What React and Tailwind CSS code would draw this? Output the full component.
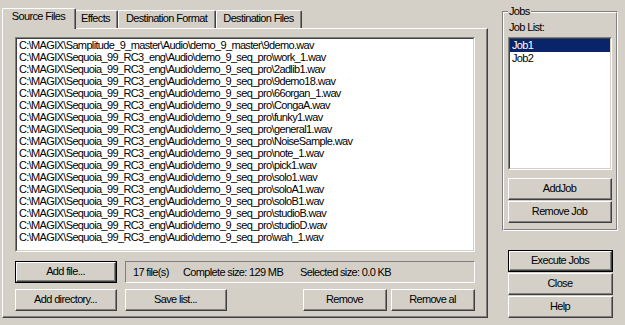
import React from "react";

const files = [
  "C:\\MAGIX\\Samplitude_9_master\\Audio\\demo_9_master\\9demo.wav",
  "C:\\MAGIX\\Sequoia_99_RC3_eng\\Audio\\demo_9_seq_pro\\work_1.wav",
  "C:\\MAGIX\\Sequoia_99_RC3_eng\\Audio\\demo_9_seq_pro\\2adlib1.wav",
  "C:\\MAGIX\\Sequoia_99_RC3_eng\\Audio\\demo_9_seq_pro\\9demo18.wav",
  "C:\\MAGIX\\Sequoia_99_RC3_eng\\Audio\\demo_9_seq_pro\\66organ_1.wav",
  "C:\\MAGIX\\Sequoia_99_RC3_eng\\Audio\\demo_9_seq_pro\\CongaA.wav",
  "C:\\MAGIX\\Sequoia_99_RC3_eng\\Audio\\demo_9_seq_pro\\funky1.wav",
  "C:\\MAGIX\\Sequoia_99_RC3_eng\\Audio\\demo_9_seq_pro\\general1.wav",
  "C:\\MAGIX\\Sequoia_99_RC3_eng\\Audio\\demo_9_seq_pro\\NoiseSample.wav",
  "C:\\MAGIX\\Sequoia_99_RC3_eng\\Audio\\demo_9_seq_pro\\note_1.wav",
  "C:\\MAGIX\\Sequoia_99_RC3_eng\\Audio\\demo_9_seq_pro\\pick1.wav",
  "C:\\MAGIX\\Sequoia_99_RC3_eng\\Audio\\demo_9_seq_pro\\solo1.wav",
  "C:\\MAGIX\\Sequoia_99_RC3_eng\\Audio\\demo_9_seq_pro\\soloA1.wav",
  "C:\\MAGIX\\Sequoia_99_RC3_eng\\Audio\\demo_9_seq_pro\\soloB1.wav",
  "C:\\MAGIX\\Sequoia_99_RC3_eng\\Audio\\demo_9_seq_pro\\studioB.wav",
  "C:\\MAGIX\\Sequoia_99_RC3_eng\\Audio\\demo_9_seq_pro\\studioD.wav",
  "C:\\MAGIX\\Sequoia_99_RC3_eng\\Audio\\demo_9_seq_pro\\wah_1.wav",
];

function Raised({ children }) {
  return (
    <div className="h-full w-full border border-t-white border-l-white border-r-[#404040] border-b-[#404040]">
      <div className="h-full w-full flex items-center justify-center border-r border-b border-[#808080] leading-[13px]">
        {children}
      </div>
    </div>
  );
}

function Btn({ children, className = "", def = false }) {
  return (
    <div className={"h-[22px] shrink-0 " + className}>
      {def ? (
        <div className="h-full w-full border border-black">
          <Raised>{children}</Raised>
        </div>
      ) : (
        <Raised>{children}</Raised>
      )}
    </div>
  );
}

function Sunken({ children, className = "" }) {
  return (
    <div className={"border border-t-[#808080] border-l-[#808080] border-r-white border-b-white " + className}>
      <div className="h-full w-full border border-t-[#404040] border-l-[#404040] border-r-[#D4D0C8] border-b-[#D4D0C8] bg-white overflow-hidden">
        {children}
      </div>
    </div>
  );
}

function Tab({ label, selected, className = "" }) {
  return (
    <div
      className={
        (selected
          ? "h-[21px] relative z-10 "
          : "h-[18px] mt-[2px] relative z-0 ") +
        "bg-[#D4D0C8] rounded-tl-[2px] rounded-tr-[2px] border-l border-t border-r border-l-white border-t-white border-r-[#404040] " +
        className
      }
    >
      <div className="h-full border-r border-[#808080] flex justify-center pt-[1px]">
        <span className="leading-[13px] h-[13px] whitespace-nowrap">{label}</span>
      </div>
    </div>
  );
}

export default function App() {
  return (
    <div className="w-[625px] h-[325px] bg-[#D4D0C8] flex overflow-hidden text-black text-[11px] tracking-[-0.65px] font-['Liberation_Sans',Arial,sans-serif]">
      {/* Left: tab control */}
      <div className="ml-[2px] mt-[8px] w-[486px] flex flex-col shrink-0">
        <div className="h-[20px] flex items-start">
          <Tab label="Source Files" selected className="w-[74px]" />
          <Tab label="Effects" className="w-[44px] -ml-[2px]" />
          <Tab label="Destination Format" className="w-[98px]" />
          <Tab label="Destination Files" className="w-[86px]" />
        </div>
        <div className="h-[290px] border border-t-white border-l-white border-r-[#404040] border-b-[#404040]">
          <div className="h-full w-full border-r border-b border-[#808080] pl-[12px] pt-[8px] flex flex-col">
            <Sunken className="w-[460px] h-[215px]">
              <div className="flex flex-col pl-[2px]">
                {files.map((f) => (
                  <div key={f} className="h-[12px] leading-[12px] whitespace-nowrap">
                    {f}
                  </div>
                ))}
              </div>
            </Sunken>
            <div className="mt-[9px] flex h-[22px]">
              <Btn def className="w-[102px]">Add file...</Btn>
              <div className="ml-[8px] w-[350px] h-[22px] border border-t-[#808080] border-l-[#808080] border-r-white border-b-white flex items-center pl-[7px] leading-[13px] whitespace-nowrap">
                <span className="w-[50px]">17 file(s)</span>
                <span className="w-[117px]">Complete size: 129 MB</span>
                <span>Selected size: 0.0 KB</span>
              </div>
            </div>
            <div className="mt-[6px] flex h-[22px]">
              <Btn className="w-[102px]">Add directory...</Btn>
              <Btn className="w-[102px] ml-[8px]">Save list...</Btn>
              <Btn className="w-[84px] ml-[76px]">Remove</Btn>
              <Btn className="w-[84px] ml-[4px]">Remove al</Btn>
            </div>
          </div>
        </div>
      </div>

      {/* Right column */}
      <div className="ml-[14px] w-[116px] flex flex-col shrink-0">
        <div className="mt-[11px] h-[220px] relative border border-t-[#808080] border-l-[#808080] border-r-white border-b-white">
          <div className="h-full w-full border border-t-white border-l-white border-r-[#808080] border-b-[#808080] flex flex-col px-[4px] pt-[8px]">
            <div className="leading-[13px] h-[13px] pl-[1px]">Job List:</div>
            <Sunken className="mt-[3px] w-[104px] h-[133px]">
              <div className="flex flex-col">
                <div className="h-[13px] leading-[13px] bg-[#0A246A] text-white pl-[2px]">Job1</div>
                <div className="h-[13px] leading-[13px] pl-[2px]">Job2</div>
              </div>
            </Sunken>
            <Btn className="mt-[8px] w-[104px]">AddJob</Btn>
            <Btn className="mt-[1px] w-[104px]">Remove Job</Btn>
          </div>
          <span className="absolute left-[5px] -top-[7px] px-[1px] bg-[#D4D0C8] leading-[13px]">Jobs</span>
        </div>
        <div className="ml-[6px] mt-[19px] w-[105px] flex flex-col">
          <Btn def className="w-[105px]">Execute Jobs</Btn>
          <Btn className="mt-[1px] w-[105px]">Close</Btn>
          <Btn className="mt-[1px] w-[105px]">Help</Btn>
        </div>
      </div>
    </div>
  );
}
